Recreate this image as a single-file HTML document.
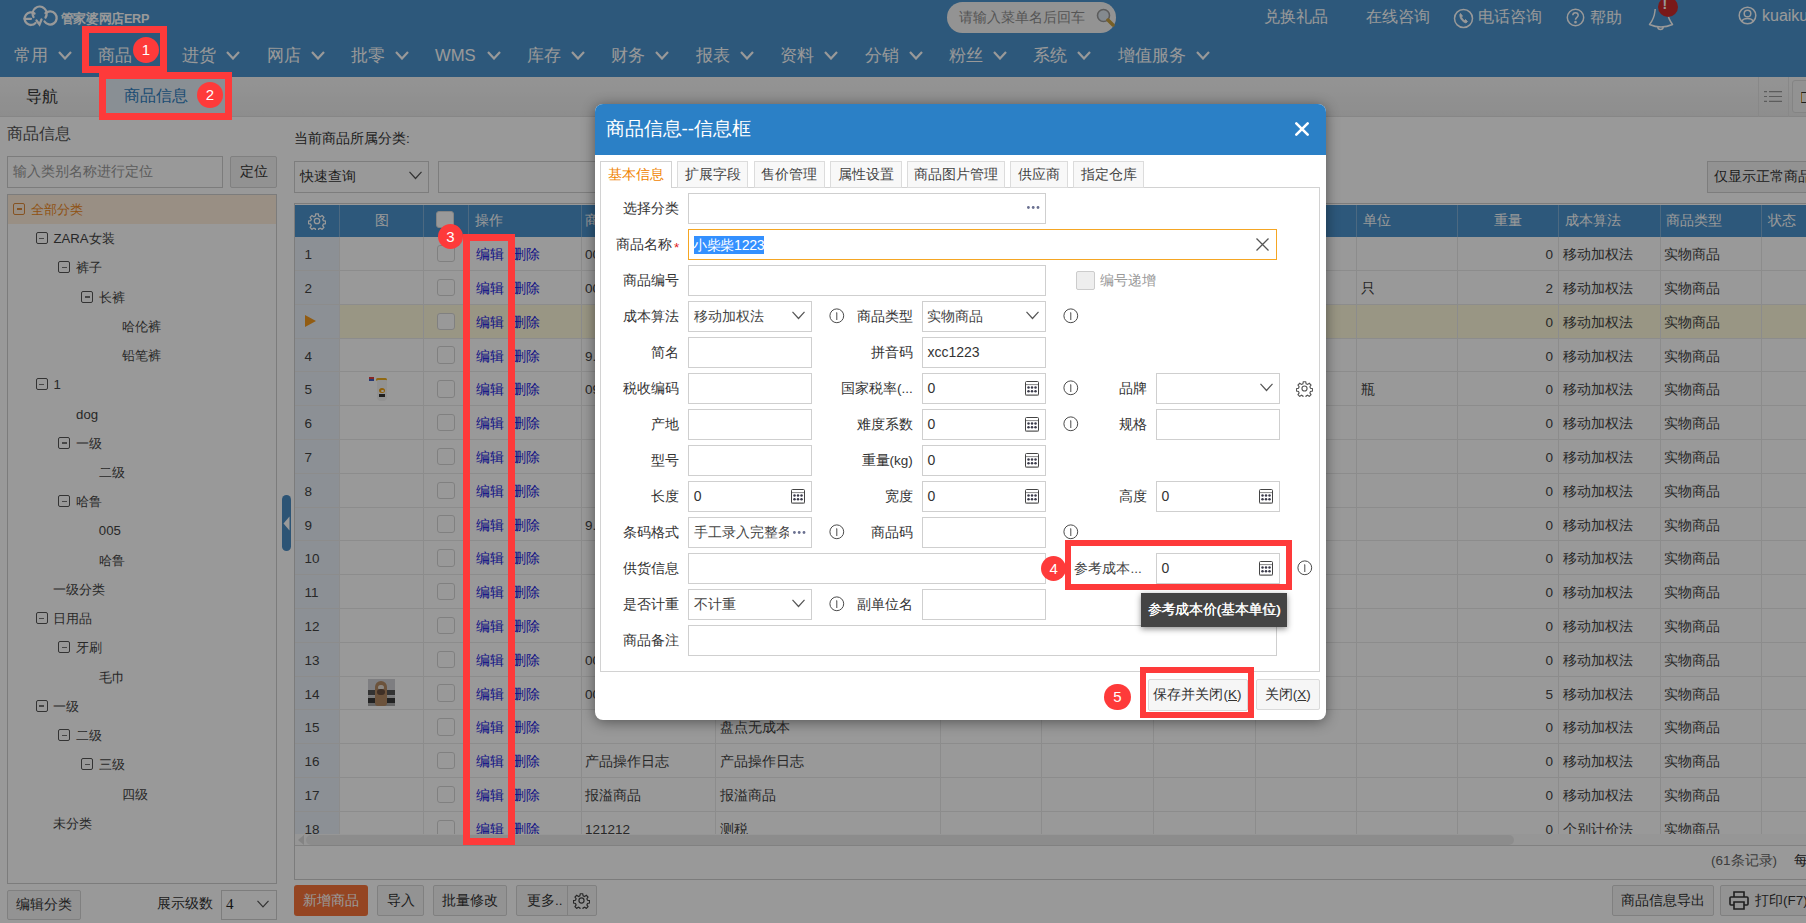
<!DOCTYPE html>
<html><head><meta charset="utf-8">
<style>
*{box-sizing:border-box;margin:0;padding:0}
html,body{width:1806px;height:923px;overflow:hidden;background:#fff;font-family:"Liberation Sans",sans-serif;color:#333}
.a{position:absolute;white-space:nowrap}
#hdr{position:absolute;left:0;top:0;width:1806px;height:77px;background:#4b93cd}
.nav{position:absolute;top:45px;height:22px;line-height:22px;font-size:16.6px;color:#fff;white-space:nowrap}
.chev{position:absolute;top:51px;width:14px;height:9px}
#tabbar{position:absolute;left:0;top:77px;width:1806px;height:40px;background:linear-gradient(#f7f7f7,#ececec);border-bottom:1px solid #e0e0e0}
.inp{position:absolute;background:#fff;border:1px solid #d0d0d0}
.btn{position:absolute;background:#f6f6f6;border:1px solid #d6d6d6;border-radius:2px;text-align:center;color:#333;white-space:nowrap}
.tree{position:absolute;font-size:13.2px;line-height:20px;color:#444;white-space:nowrap}
.tb{position:absolute;width:12px;height:12px;border:1px solid #555;border-radius:2px}
.tb:after{content:"";position:absolute;left:2.5px;top:4.5px;width:5px;height:1.5px;background:#777}
.tb0:after{background:#e08a3a}
#mask{position:absolute;left:0;top:0;width:1806px;height:923px;background:rgba(0,0,0,0.4)}
.red{position:absolute;border:7px solid #fe3a3a}
.circ{position:absolute;width:26px;height:26px;border-radius:50%;background:#fe3a3a;color:#fff;font-size:15px;line-height:26px;text-align:center}
</style></head><body>
<!-- HEADER -->
<div id="hdr">
  <svg class="a" style="left:0;top:0" width="60" height="30" viewBox="0 0 60 30" fill="none" stroke="#fff" stroke-width="2.3" stroke-linecap="round">
    <path d="M34.5 13.5 A6.3 6.3 0 1 0 35.5 23"/>
    <path d="M24.5 18.8 H31"/>
    <path d="M33.5 17 A7 7 0 1 1 45.5 17.5"/>
    <path d="M45.5 13.2 A6.6 6.6 0 1 1 44.5 21.5"/>
    <path d="M36.5 20.5 L39.5 24.5 L41.5 19.5"/>
  </svg>
  <div class="a" style="left:60.5px;top:10.5px;font-size:12.6px;line-height:16px;color:#fff;font-weight:bold;letter-spacing:-0.3px">管家婆网店ERP</div>
  <div class="a" style="left:947px;top:2px;width:169px;height:31px;border-radius:16px;background:#f6f6f6"></div>
  <div class="a" style="left:959px;top:8px;font-size:13.5px;line-height:19px;color:#8e8e8e">请输入菜单名后回车</div>
  <svg class="a" style="left:1096px;top:8px" width="19" height="19" viewBox="0 0 19 19">
    <circle cx="7.5" cy="7.5" r="6" fill="#dde6ef" stroke="#9a9a9a" stroke-width="1.6"/>
    <path d="M12 12 L17 17" stroke="#c8a040" stroke-width="3.5" stroke-linecap="round"/>
  </svg>
  <div class="a" style="left:1264px;top:7px;font-size:15.75px;line-height:20px;color:#fff">兑换礼品</div>
  <div class="a" style="left:1366px;top:7px;font-size:15.75px;line-height:20px;color:#fff">在线咨询</div>
  <svg class="a" style="left:1453px;top:8px" width="21" height="21" viewBox="0 0 21 21" fill="none" stroke="#fff" stroke-width="1.5">
    <circle cx="10.5" cy="10.5" r="9"/>
    <path d="M7 6 C6 9 9 14 13 15 L14.5 13.5 L12.5 11.5 L11.5 12.5 C10 11.5 9 10.5 8.5 9 L9.5 8 L7.5 5.5 Z" fill="#fff" stroke-width="0.8"/>
  </svg>
  <div class="a" style="left:1478px;top:7px;font-size:15.75px;line-height:20px;color:#fff">电话咨询</div>
  <svg class="a" style="left:1566px;top:8px" width="19" height="19" viewBox="0 0 19 19" fill="none" stroke="#fff" stroke-width="1.5">
    <circle cx="9.5" cy="9.5" r="8.2"/>
    <path d="M6.8 7.3 C6.8 3.8 12.2 3.8 12.2 7.3 C12.2 9.3 9.5 9.5 9.5 11.8"/>
    <circle cx="9.5" cy="14.2" r="0.6" fill="#fff"/>
  </svg>
  <div class="a" style="left:1590px;top:8px;font-size:15.75px;line-height:20px;color:#fff">帮助</div>
  <svg class="a" style="left:1648px;top:6px" width="27" height="26" viewBox="0 0 27 26" fill="none" stroke="#fff" stroke-width="1.5" stroke-linejoin="round">
    <path d="M7.2 3 C6.6 8 6.8 12 1.5 18.5 Q13 23.5 24.5 18.5 C19.5 12 19.5 8 18.5 3"/>
    <path d="M9.8 21 C10 24.3 15 24.3 15.2 21"/>
  </svg>
  <div class="a" style="left:1657.5px;top:-3.3px;width:20px;height:20px;border-radius:50%;background:#cc2a2a;color:#fff;font-size:14px;line-height:15px;text-align:left;padding-left:5px;font-weight:bold">!</div>
  <svg class="a" style="left:1738px;top:6px" width="19" height="19" viewBox="0 0 19 19" fill="none" stroke="#fff" stroke-width="1.5">
    <circle cx="9.5" cy="9.5" r="8.3"/>
    <circle cx="9.5" cy="7.5" r="3.3"/>
    <path d="M3.8 15.5 C5 11.5 14 11.5 15.2 15.5"/>
  </svg>
  <div class="a" style="left:1762px;top:6px;font-size:16px;line-height:20px;color:#fff">kuaiku</div>

  <div class="nav" style="left:14px">常用</div>
  <div class="nav" style="left:98px">商品</div>
  <div class="nav" style="left:182px">进货</div>
  <div class="nav" style="left:267px">网店</div>
  <div class="nav" style="left:351px">批零</div>
  <div class="nav" style="left:435px">WMS</div>
  <div class="nav" style="left:527px">库存</div>
  <div class="nav" style="left:611px">财务</div>
  <div class="nav" style="left:696px">报表</div>
  <div class="nav" style="left:780px">资料</div>
  <div class="nav" style="left:865px">分销</div>
  <div class="nav" style="left:949px">粉丝</div>
  <div class="nav" style="left:1033px">系统</div>
  <div class="nav" style="left:1118px">增值服务</div>
  <svg class="chev" style="left:57.5px" viewBox="0 0 14 9" fill="none" stroke="#fff" stroke-width="2.2"><path d="M1 1 L7 7.5 L13 1"/></svg>
<svg class="chev" style="left:141.5px" viewBox="0 0 14 9" fill="none" stroke="#fff" stroke-width="2.2"><path d="M1 1 L7 7.5 L13 1"/></svg>
<svg class="chev" style="left:225.5px" viewBox="0 0 14 9" fill="none" stroke="#fff" stroke-width="2.2"><path d="M1 1 L7 7.5 L13 1"/></svg>
<svg class="chev" style="left:310.5px" viewBox="0 0 14 9" fill="none" stroke="#fff" stroke-width="2.2"><path d="M1 1 L7 7.5 L13 1"/></svg>
<svg class="chev" style="left:394.5px" viewBox="0 0 14 9" fill="none" stroke="#fff" stroke-width="2.2"><path d="M1 1 L7 7.5 L13 1"/></svg>
<svg class="chev" style="left:570.5px" viewBox="0 0 14 9" fill="none" stroke="#fff" stroke-width="2.2"><path d="M1 1 L7 7.5 L13 1"/></svg>
<svg class="chev" style="left:654.5px" viewBox="0 0 14 9" fill="none" stroke="#fff" stroke-width="2.2"><path d="M1 1 L7 7.5 L13 1"/></svg>
<svg class="chev" style="left:739.5px" viewBox="0 0 14 9" fill="none" stroke="#fff" stroke-width="2.2"><path d="M1 1 L7 7.5 L13 1"/></svg>
<svg class="chev" style="left:823.5px" viewBox="0 0 14 9" fill="none" stroke="#fff" stroke-width="2.2"><path d="M1 1 L7 7.5 L13 1"/></svg>
<svg class="chev" style="left:908.5px" viewBox="0 0 14 9" fill="none" stroke="#fff" stroke-width="2.2"><path d="M1 1 L7 7.5 L13 1"/></svg>
<svg class="chev" style="left:992.5px" viewBox="0 0 14 9" fill="none" stroke="#fff" stroke-width="2.2"><path d="M1 1 L7 7.5 L13 1"/></svg>
<svg class="chev" style="left:1076.5px" viewBox="0 0 14 9" fill="none" stroke="#fff" stroke-width="2.2"><path d="M1 1 L7 7.5 L13 1"/></svg>
<svg class="chev" style="left:486.5px" viewBox="0 0 14 9" fill="none" stroke="#fff" stroke-width="2.2"><path d="M1 1 L7 7.5 L13 1"/></svg>
<svg class="chev" style="left:1196px" viewBox="0 0 14 9" fill="none" stroke="#fff" stroke-width="2.2"><path d="M1 1 L7 7.5 L13 1"/></svg>

</div>
<!-- TABBAR -->
<div id="tabbar"></div>
<div class="a" style="left:26px;top:87px;font-size:15.75px;line-height:20px;color:#333">导航</div>
<div class="a" style="left:99px;top:77px;width:133px;height:40px;background:#e4eef7"></div>
<div class="a" style="left:124px;top:86px;font-size:15.75px;line-height:20px;color:#2f7fc1">商品信息</div>
<div class="a" style="left:1758px;top:77px;width:1px;height:40px;background:#e3e3e3"></div>
<div class="a" style="left:1788px;top:77px;width:1px;height:40px;background:#e3e3e3"></div>
<svg class="a" style="left:1764px;top:91px" width="19" height="11" viewBox="0 0 19 11" stroke="#999" stroke-width="1.2">
  <path d="M0 .6 H3 M5 .6 H18 M0 5.5 H3 M5 5.5 H18 M0 10.4 H3 M5 10.4 H18"/>
</svg>
<div class="a" style="left:1792px;top:80px;width:30px;height:33px;border:1px solid #ddd;border-radius:3px;background:#f3f3f3"></div>
<div class="a" style="left:1801px;top:92px;width:8px;height:11px;border:1.5px solid #333;border-left-color:#e0a040"></div>


<div class="a" style="left:7px;top:124px;font-size:15.75px;line-height:20px;color:#555">商品信息</div>
<div class="inp" style="left:7px;top:156px;width:216px;height:32px;border-color:#cfcfcf"></div>
<div class="a" style="left:13px;top:162px;font-size:13.5px;line-height:20px;color:#9a9a9a">输入类别名称进行定位</div>
<div class="btn" style="left:230px;top:156px;width:47px;height:32px;line-height:30px;font-size:13.5px;background:#f3f3f3">定位</div>
<div class="inp" style="left:7px;top:194px;width:270px;height:690px;border-color:#cfcfcf"></div>
<div class="a" style="left:8px;top:195px;width:268px;height:29px;background:#ffeedd"></div>
<div class="tb tb0" style="left:13.0px;top:202.8px;border-color:#e08a3a"></div>
<div class="tree" style="left:30.7px;top:199.8px;color:#f08a1c">全部分类</div>
<div class="tb" style="left:35.7px;top:232.0px;border-color:#555"></div>
<div class="tree" style="left:53.4px;top:229.0px;color:#444">ZARA女装</div>
<div class="tb" style="left:58.4px;top:261.3px;border-color:#555"></div>
<div class="tree" style="left:76.1px;top:258.3px;color:#444">裤子</div>
<div class="tb" style="left:81.1px;top:290.5px;border-color:#555"></div>
<div class="tree" style="left:98.8px;top:287.5px;color:#444">长裤</div>
<div class="tree" style="left:121.5px;top:316.8px;color:#444">哈伦裤</div>
<div class="tree" style="left:121.5px;top:346.0px;color:#444">铅笔裤</div>
<div class="tb" style="left:35.7px;top:378.2px;border-color:#555"></div>
<div class="tree" style="left:53.4px;top:375.2px;color:#444">1</div>
<div class="tree" style="left:76.1px;top:404.5px;color:#444">dog</div>
<div class="tb" style="left:58.4px;top:436.7px;border-color:#555"></div>
<div class="tree" style="left:76.1px;top:433.7px;color:#444">一级</div>
<div class="tree" style="left:98.8px;top:463.0px;color:#444">二级</div>
<div class="tb" style="left:58.4px;top:495.2px;border-color:#555"></div>
<div class="tree" style="left:76.1px;top:492.2px;color:#444">哈鲁</div>
<div class="tree" style="left:98.8px;top:521.4px;color:#444">005</div>
<div class="tree" style="left:98.8px;top:550.7px;color:#444">哈鲁</div>
<div class="tree" style="left:53.4px;top:579.9px;color:#444">一级分类</div>
<div class="tb" style="left:35.7px;top:612.2px;border-color:#555"></div>
<div class="tree" style="left:53.4px;top:609.2px;color:#444">日用品</div>
<div class="tb" style="left:58.4px;top:641.4px;border-color:#555"></div>
<div class="tree" style="left:76.1px;top:638.4px;color:#444">牙刷</div>
<div class="tree" style="left:98.8px;top:667.6px;color:#444">毛巾</div>
<div class="tb" style="left:35.7px;top:699.9px;border-color:#555"></div>
<div class="tree" style="left:53.4px;top:696.9px;color:#444">一级</div>
<div class="tb" style="left:58.4px;top:729.1px;border-color:#555"></div>
<div class="tree" style="left:76.1px;top:726.1px;color:#444">二级</div>
<div class="tb" style="left:81.1px;top:758.4px;border-color:#555"></div>
<div class="tree" style="left:98.8px;top:755.4px;color:#444">三级</div>
<div class="tree" style="left:121.5px;top:784.6px;color:#444">四级</div>
<div class="tree" style="left:53.4px;top:813.8px;color:#444">未分类</div>

<div class="btn" style="left:7px;top:890px;width:74px;height:30px;line-height:28px;font-size:13.5px">编辑分类</div>
<div class="a" style="left:157px;top:894px;font-size:13.5px;line-height:20px;color:#333">展示级数</div>
<div class="inp" style="left:221px;top:890px;width:56px;height:30px"></div>
<div class="a" style="left:226px;top:894px;font-size:15px;line-height:20px;color:#222;font-family:'Liberation Serif',serif">4</div>
<svg class="a" style="left:257px;top:900px" width="12" height="8" viewBox="0 0 12 8" fill="none" stroke="#555" stroke-width="1.2"><path d="M.5 .8 L6 6.8 L11.5 .8"/></svg>
<div class="a" style="left:282px;top:495px;width:9px;height:56px;border-radius:5px;background:#4a8cc4"></div>
<svg class="a" style="left:283px;top:516px" width="7" height="15" viewBox="0 0 7 15"><path d="M6.5 0.5 L0.5 7.5 L6.5 14.5 Z" fill="#fff"/></svg>


<div class="a" style="left:294px;top:129px;font-size:13.5px;line-height:20px;color:#333">当前商品所属分类:</div>
<div class="inp" style="left:294px;top:161px;width:135px;height:32px"></div>
<div class="a" style="left:300px;top:167px;font-size:13.5px;line-height:20px;color:#333">快速查询</div>
<svg class="a" style="left:409px;top:171px" width="13" height="9" viewBox="0 0 13 9" fill="none" stroke="#555" stroke-width="1.2"><path d="M.5 .8 L6.5 7.5 L12.5 .8"/></svg>
<div class="inp" style="left:438px;top:161px;width:400px;height:32px"></div>
<div class="btn" style="left:1707px;top:161px;width:120px;height:32px;line-height:30px;font-size:13.5px;text-align:left;padding-left:6px;background:#f4f4f4;border-color:#d0d0d0;border-radius:0">仅显示正常商品</div>
<div class="a" style="left:294px;top:203px;width:1512px;height:677px;border-left:1px solid #cfcfcf;border-top:1px solid #cfcfcf;border-bottom:1px solid #cfcfcf"></div>
<div class="a" style="left:295px;top:204.5px;width:1511px;height:32.2px;background:#4b93cd"></div>
<div class="a" style="left:295px;top:236.7px;width:44px;height:597.3px;background:#eaf1f8"></div>
<div class="a" style="left:339px;top:304.3px;width:1467px;height:33.8px;background:#fffbdc"></div>

<div class="a" style="left:338.5px;top:204.5px;width:1px;height:32.2px;background:#7fb0d8"></div>
<div class="a" style="left:338.5px;top:236.7px;width:1px;height:597.3px;background:#eaeaea"></div>
<div class="a" style="left:423.0px;top:204.5px;width:1px;height:32.2px;background:#7fb0d8"></div>
<div class="a" style="left:423.0px;top:236.7px;width:1px;height:597.3px;background:#eaeaea"></div>
<div class="a" style="left:467.5px;top:204.5px;width:1px;height:32.2px;background:#7fb0d8"></div>
<div class="a" style="left:467.5px;top:236.7px;width:1px;height:597.3px;background:#eaeaea"></div>
<div class="a" style="left:581.0px;top:204.5px;width:1px;height:32.2px;background:#7fb0d8"></div>
<div class="a" style="left:581.0px;top:236.7px;width:1px;height:597.3px;background:#eaeaea"></div>
<div class="a" style="left:714.5px;top:204.5px;width:1px;height:32.2px;background:#7fb0d8"></div>
<div class="a" style="left:714.5px;top:236.7px;width:1px;height:597.3px;background:#eaeaea"></div>
<div class="a" style="left:939.8px;top:204.5px;width:1px;height:32.2px;background:#7fb0d8"></div>
<div class="a" style="left:939.8px;top:236.7px;width:1px;height:597.3px;background:#eaeaea"></div>
<div class="a" style="left:1040.8px;top:204.5px;width:1px;height:32.2px;background:#7fb0d8"></div>
<div class="a" style="left:1040.8px;top:236.7px;width:1px;height:597.3px;background:#eaeaea"></div>
<div class="a" style="left:1152.9px;top:204.5px;width:1px;height:32.2px;background:#7fb0d8"></div>
<div class="a" style="left:1152.9px;top:236.7px;width:1px;height:597.3px;background:#eaeaea"></div>
<div class="a" style="left:1255.1px;top:204.5px;width:1px;height:32.2px;background:#7fb0d8"></div>
<div class="a" style="left:1255.1px;top:236.7px;width:1px;height:597.3px;background:#eaeaea"></div>
<div class="a" style="left:1356.1px;top:204.5px;width:1px;height:32.2px;background:#7fb0d8"></div>
<div class="a" style="left:1356.1px;top:236.7px;width:1px;height:597.3px;background:#eaeaea"></div>
<div class="a" style="left:1456.7px;top:204.5px;width:1px;height:32.2px;background:#7fb0d8"></div>
<div class="a" style="left:1456.7px;top:236.7px;width:1px;height:597.3px;background:#eaeaea"></div>
<div class="a" style="left:1557.7px;top:204.5px;width:1px;height:32.2px;background:#7fb0d8"></div>
<div class="a" style="left:1557.7px;top:236.7px;width:1px;height:597.3px;background:#eaeaea"></div>
<div class="a" style="left:1659.9px;top:204.5px;width:1px;height:32.2px;background:#7fb0d8"></div>
<div class="a" style="left:1659.9px;top:236.7px;width:1px;height:597.3px;background:#eaeaea"></div>
<div class="a" style="left:1760.8px;top:204.5px;width:1px;height:32.2px;background:#7fb0d8"></div>
<div class="a" style="left:1760.8px;top:236.7px;width:1px;height:597.3px;background:#eaeaea"></div>
<div class="a" style="left:295px;top:270.0px;width:1511px;height:1px;background:#eaeaea"></div>
<div class="a" style="left:295px;top:303.8px;width:1511px;height:1px;background:#eaeaea"></div>
<div class="a" style="left:295px;top:337.6px;width:1511px;height:1px;background:#eaeaea"></div>
<div class="a" style="left:295px;top:371.4px;width:1511px;height:1px;background:#eaeaea"></div>
<div class="a" style="left:295px;top:405.2px;width:1511px;height:1px;background:#eaeaea"></div>
<div class="a" style="left:295px;top:439.0px;width:1511px;height:1px;background:#eaeaea"></div>
<div class="a" style="left:295px;top:472.8px;width:1511px;height:1px;background:#eaeaea"></div>
<div class="a" style="left:295px;top:506.6px;width:1511px;height:1px;background:#eaeaea"></div>
<div class="a" style="left:295px;top:540.4px;width:1511px;height:1px;background:#eaeaea"></div>
<div class="a" style="left:295px;top:574.2px;width:1511px;height:1px;background:#eaeaea"></div>
<div class="a" style="left:295px;top:608.0px;width:1511px;height:1px;background:#eaeaea"></div>
<div class="a" style="left:295px;top:641.8px;width:1511px;height:1px;background:#eaeaea"></div>
<div class="a" style="left:295px;top:675.6px;width:1511px;height:1px;background:#eaeaea"></div>
<div class="a" style="left:295px;top:709.4px;width:1511px;height:1px;background:#eaeaea"></div>
<div class="a" style="left:295px;top:743.2px;width:1511px;height:1px;background:#eaeaea"></div>
<div class="a" style="left:295px;top:777.0px;width:1511px;height:1px;background:#eaeaea"></div>
<div class="a" style="left:295px;top:810.8px;width:1511px;height:1px;background:#eaeaea"></div>
<svg class="a" style="left:307.5px;top:211.5px" width="18" height="18" viewBox="0 0 24 24" fill="none" stroke="#fff" stroke-width="1.7">
<path d="M10.3 2.5h3.4l.6 2.9 2 .9 2.5-1.6 2.4 2.4-1.6 2.5.9 2 2.9.6v3.4l-2.9.6-.9 2 1.6 2.5-2.4 2.4-2.5-1.6-2 .9-.6 2.9h-3.4l-.6-2.9-2-.9-2.5 1.6-2.4-2.4 1.6-2.5-.9-2-2.9-.6v-3.4l2.9-.6.9-2-1.6-2.5 2.4-2.4 2.5 1.6 2-.9z"/><circle cx="12" cy="12" r="3.6"/></svg>
<div class="a" style="left:374.5px;top:210.5px;font-size:13.5px;line-height:20px;color:#fff">图</div>
<div class="a" style="left:435.5px;top:210.5px;width:18px;height:17.5px;border-radius:3px;background:#fff;border:1px solid #ddd"></div>
<div class="a" style="left:474.5px;top:210.5px;font-size:13.5px;line-height:20px;color:#fff">操作</div>
<div class="a" style="left:585px;top:210.5px;font-size:13.5px;line-height:20px;color:#fff">商品编号</div>
<div class="a" style="left:1363px;top:210.5px;font-size:13.5px;line-height:20px;color:#fff">单位</div>
<div class="a" style="left:1494px;top:210.5px;font-size:13.5px;line-height:20px;color:#fff">重量</div>
<div class="a" style="left:1565px;top:210.5px;font-size:13.5px;line-height:20px;color:#fff">成本算法</div>
<div class="a" style="left:1666px;top:210.5px;font-size:13.5px;line-height:20px;color:#fff">商品类型</div>
<div class="a" style="left:1768px;top:210.5px;font-size:13.5px;line-height:20px;color:#fff">状态</div>
<div class="a" style="left:304.5px;top:245.1px;font-size:13.5px;line-height:20px;color:#444">1</div>
<div class="a" style="left:436.5px;top:244.9px;width:18px;height:17.5px;border-radius:3px;background:#fff;border:1px solid #d6d6d6"></div>
<div class="a" style="left:476px;top:245.1px;font-size:13.5px;line-height:20px;color:#2020e0">编辑</div>
<div class="a" style="left:512px;top:245.1px;font-size:13.5px;line-height:20px;color:#2020e0">删除</div>
<div class="a" style="left:585px;top:245.1px;font-size:13.5px;line-height:20px;color:#444">0001</div>
<div class="a" style="left:1457px;width:96px;text-align:right;top:245.1px;font-size:13.5px;line-height:20px;color:#444">0</div>
<div class="a" style="left:1563px;top:245.1px;font-size:13.5px;line-height:20px;color:#444">移动加权法</div>
<div class="a" style="left:1664px;top:245.1px;font-size:13.5px;line-height:20px;color:#444">实物商品</div>
<div class="a" style="left:304.5px;top:278.9px;font-size:13.5px;line-height:20px;color:#444">2</div>
<div class="a" style="left:436.5px;top:278.7px;width:18px;height:17.5px;border-radius:3px;background:#fff;border:1px solid #d6d6d6"></div>
<div class="a" style="left:476px;top:278.9px;font-size:13.5px;line-height:20px;color:#2020e0">编辑</div>
<div class="a" style="left:512px;top:278.9px;font-size:13.5px;line-height:20px;color:#2020e0">删除</div>
<div class="a" style="left:585px;top:278.9px;font-size:13.5px;line-height:20px;color:#444">0002</div>
<div class="a" style="left:1361px;top:278.9px;font-size:13.5px;line-height:20px;color:#444">只</div>
<div class="a" style="left:1457px;width:96px;text-align:right;top:278.9px;font-size:13.5px;line-height:20px;color:#444">2</div>
<div class="a" style="left:1563px;top:278.9px;font-size:13.5px;line-height:20px;color:#444">移动加权法</div>
<div class="a" style="left:1664px;top:278.9px;font-size:13.5px;line-height:20px;color:#444">实物商品</div>
<svg class="a" style="left:305px;top:315.2px" width="11" height="12" viewBox="0 0 11 12"><path d="M0 0 L11 6 L0 12Z" fill="#f39a1e"/></svg>
<div class="a" style="left:436.5px;top:312.5px;width:18px;height:17.5px;border-radius:3px;background:#fff;border:1px solid #d6d6d6"></div>
<div class="a" style="left:476px;top:312.7px;font-size:13.5px;line-height:20px;color:#2020e0">编辑</div>
<div class="a" style="left:512px;top:312.7px;font-size:13.5px;line-height:20px;color:#2020e0">删除</div>
<div class="a" style="left:1457px;width:96px;text-align:right;top:312.7px;font-size:13.5px;line-height:20px;color:#444">0</div>
<div class="a" style="left:1563px;top:312.7px;font-size:13.5px;line-height:20px;color:#444">移动加权法</div>
<div class="a" style="left:1664px;top:312.7px;font-size:13.5px;line-height:20px;color:#444">实物商品</div>
<div class="a" style="left:304.5px;top:346.5px;font-size:13.5px;line-height:20px;color:#444">4</div>
<div class="a" style="left:436.5px;top:346.3px;width:18px;height:17.5px;border-radius:3px;background:#fff;border:1px solid #d6d6d6"></div>
<div class="a" style="left:476px;top:346.5px;font-size:13.5px;line-height:20px;color:#2020e0">编辑</div>
<div class="a" style="left:512px;top:346.5px;font-size:13.5px;line-height:20px;color:#2020e0">删除</div>
<div class="a" style="left:585px;top:346.5px;font-size:13.5px;line-height:20px;color:#444">9.9</div>
<div class="a" style="left:1457px;width:96px;text-align:right;top:346.5px;font-size:13.5px;line-height:20px;color:#444">0</div>
<div class="a" style="left:1563px;top:346.5px;font-size:13.5px;line-height:20px;color:#444">移动加权法</div>
<div class="a" style="left:1664px;top:346.5px;font-size:13.5px;line-height:20px;color:#444">实物商品</div>
<div class="a" style="left:304.5px;top:380.3px;font-size:13.5px;line-height:20px;color:#444">5</div>
<div class="a" style="left:436.5px;top:380.1px;width:18px;height:17.5px;border-radius:3px;background:#fff;border:1px solid #d6d6d6"></div>
<div class="a" style="left:476px;top:380.3px;font-size:13.5px;line-height:20px;color:#2020e0">编辑</div>
<div class="a" style="left:512px;top:380.3px;font-size:13.5px;line-height:20px;color:#2020e0">删除</div>
<div class="a" style="left:585px;top:380.3px;font-size:13.5px;line-height:20px;color:#444">0901</div>
<div class="a" style="left:1361px;top:380.3px;font-size:13.5px;line-height:20px;color:#444">瓶</div>
<div class="a" style="left:1457px;width:96px;text-align:right;top:380.3px;font-size:13.5px;line-height:20px;color:#444">0</div>
<div class="a" style="left:1563px;top:380.3px;font-size:13.5px;line-height:20px;color:#444">移动加权法</div>
<div class="a" style="left:1664px;top:380.3px;font-size:13.5px;line-height:20px;color:#444">实物商品</div>
<div class="a" style="left:304.5px;top:414.1px;font-size:13.5px;line-height:20px;color:#444">6</div>
<div class="a" style="left:436.5px;top:413.9px;width:18px;height:17.5px;border-radius:3px;background:#fff;border:1px solid #d6d6d6"></div>
<div class="a" style="left:476px;top:414.1px;font-size:13.5px;line-height:20px;color:#2020e0">编辑</div>
<div class="a" style="left:512px;top:414.1px;font-size:13.5px;line-height:20px;color:#2020e0">删除</div>
<div class="a" style="left:1457px;width:96px;text-align:right;top:414.1px;font-size:13.5px;line-height:20px;color:#444">0</div>
<div class="a" style="left:1563px;top:414.1px;font-size:13.5px;line-height:20px;color:#444">移动加权法</div>
<div class="a" style="left:1664px;top:414.1px;font-size:13.5px;line-height:20px;color:#444">实物商品</div>
<div class="a" style="left:304.5px;top:447.9px;font-size:13.5px;line-height:20px;color:#444">7</div>
<div class="a" style="left:436.5px;top:447.7px;width:18px;height:17.5px;border-radius:3px;background:#fff;border:1px solid #d6d6d6"></div>
<div class="a" style="left:476px;top:447.9px;font-size:13.5px;line-height:20px;color:#2020e0">编辑</div>
<div class="a" style="left:512px;top:447.9px;font-size:13.5px;line-height:20px;color:#2020e0">删除</div>
<div class="a" style="left:1457px;width:96px;text-align:right;top:447.9px;font-size:13.5px;line-height:20px;color:#444">0</div>
<div class="a" style="left:1563px;top:447.9px;font-size:13.5px;line-height:20px;color:#444">移动加权法</div>
<div class="a" style="left:1664px;top:447.9px;font-size:13.5px;line-height:20px;color:#444">实物商品</div>
<div class="a" style="left:304.5px;top:481.7px;font-size:13.5px;line-height:20px;color:#444">8</div>
<div class="a" style="left:436.5px;top:481.5px;width:18px;height:17.5px;border-radius:3px;background:#fff;border:1px solid #d6d6d6"></div>
<div class="a" style="left:476px;top:481.7px;font-size:13.5px;line-height:20px;color:#2020e0">编辑</div>
<div class="a" style="left:512px;top:481.7px;font-size:13.5px;line-height:20px;color:#2020e0">删除</div>
<div class="a" style="left:1457px;width:96px;text-align:right;top:481.7px;font-size:13.5px;line-height:20px;color:#444">0</div>
<div class="a" style="left:1563px;top:481.7px;font-size:13.5px;line-height:20px;color:#444">移动加权法</div>
<div class="a" style="left:1664px;top:481.7px;font-size:13.5px;line-height:20px;color:#444">实物商品</div>
<div class="a" style="left:304.5px;top:515.5px;font-size:13.5px;line-height:20px;color:#444">9</div>
<div class="a" style="left:436.5px;top:515.3px;width:18px;height:17.5px;border-radius:3px;background:#fff;border:1px solid #d6d6d6"></div>
<div class="a" style="left:476px;top:515.5px;font-size:13.5px;line-height:20px;color:#2020e0">编辑</div>
<div class="a" style="left:512px;top:515.5px;font-size:13.5px;line-height:20px;color:#2020e0">删除</div>
<div class="a" style="left:585px;top:515.5px;font-size:13.5px;line-height:20px;color:#444">9.9</div>
<div class="a" style="left:1457px;width:96px;text-align:right;top:515.5px;font-size:13.5px;line-height:20px;color:#444">0</div>
<div class="a" style="left:1563px;top:515.5px;font-size:13.5px;line-height:20px;color:#444">移动加权法</div>
<div class="a" style="left:1664px;top:515.5px;font-size:13.5px;line-height:20px;color:#444">实物商品</div>
<div class="a" style="left:304.5px;top:549.3px;font-size:13.5px;line-height:20px;color:#444">10</div>
<div class="a" style="left:436.5px;top:549.1px;width:18px;height:17.5px;border-radius:3px;background:#fff;border:1px solid #d6d6d6"></div>
<div class="a" style="left:476px;top:549.3px;font-size:13.5px;line-height:20px;color:#2020e0">编辑</div>
<div class="a" style="left:512px;top:549.3px;font-size:13.5px;line-height:20px;color:#2020e0">删除</div>
<div class="a" style="left:1457px;width:96px;text-align:right;top:549.3px;font-size:13.5px;line-height:20px;color:#444">0</div>
<div class="a" style="left:1563px;top:549.3px;font-size:13.5px;line-height:20px;color:#444">移动加权法</div>
<div class="a" style="left:1664px;top:549.3px;font-size:13.5px;line-height:20px;color:#444">实物商品</div>
<div class="a" style="left:304.5px;top:583.1px;font-size:13.5px;line-height:20px;color:#444">11</div>
<div class="a" style="left:436.5px;top:582.9px;width:18px;height:17.5px;border-radius:3px;background:#fff;border:1px solid #d6d6d6"></div>
<div class="a" style="left:476px;top:583.1px;font-size:13.5px;line-height:20px;color:#2020e0">编辑</div>
<div class="a" style="left:512px;top:583.1px;font-size:13.5px;line-height:20px;color:#2020e0">删除</div>
<div class="a" style="left:1457px;width:96px;text-align:right;top:583.1px;font-size:13.5px;line-height:20px;color:#444">0</div>
<div class="a" style="left:1563px;top:583.1px;font-size:13.5px;line-height:20px;color:#444">移动加权法</div>
<div class="a" style="left:1664px;top:583.1px;font-size:13.5px;line-height:20px;color:#444">实物商品</div>
<div class="a" style="left:304.5px;top:616.9px;font-size:13.5px;line-height:20px;color:#444">12</div>
<div class="a" style="left:436.5px;top:616.7px;width:18px;height:17.5px;border-radius:3px;background:#fff;border:1px solid #d6d6d6"></div>
<div class="a" style="left:476px;top:616.9px;font-size:13.5px;line-height:20px;color:#2020e0">编辑</div>
<div class="a" style="left:512px;top:616.9px;font-size:13.5px;line-height:20px;color:#2020e0">删除</div>
<div class="a" style="left:1457px;width:96px;text-align:right;top:616.9px;font-size:13.5px;line-height:20px;color:#444">0</div>
<div class="a" style="left:1563px;top:616.9px;font-size:13.5px;line-height:20px;color:#444">移动加权法</div>
<div class="a" style="left:1664px;top:616.9px;font-size:13.5px;line-height:20px;color:#444">实物商品</div>
<div class="a" style="left:304.5px;top:650.7px;font-size:13.5px;line-height:20px;color:#444">13</div>
<div class="a" style="left:436.5px;top:650.5px;width:18px;height:17.5px;border-radius:3px;background:#fff;border:1px solid #d6d6d6"></div>
<div class="a" style="left:476px;top:650.7px;font-size:13.5px;line-height:20px;color:#2020e0">编辑</div>
<div class="a" style="left:512px;top:650.7px;font-size:13.5px;line-height:20px;color:#2020e0">删除</div>
<div class="a" style="left:585px;top:650.7px;font-size:13.5px;line-height:20px;color:#444">0013</div>
<div class="a" style="left:1457px;width:96px;text-align:right;top:650.7px;font-size:13.5px;line-height:20px;color:#444">0</div>
<div class="a" style="left:1563px;top:650.7px;font-size:13.5px;line-height:20px;color:#444">移动加权法</div>
<div class="a" style="left:1664px;top:650.7px;font-size:13.5px;line-height:20px;color:#444">实物商品</div>
<div class="a" style="left:304.5px;top:684.5px;font-size:13.5px;line-height:20px;color:#444">14</div>
<div class="a" style="left:436.5px;top:684.3px;width:18px;height:17.5px;border-radius:3px;background:#fff;border:1px solid #d6d6d6"></div>
<div class="a" style="left:476px;top:684.5px;font-size:13.5px;line-height:20px;color:#2020e0">编辑</div>
<div class="a" style="left:512px;top:684.5px;font-size:13.5px;line-height:20px;color:#2020e0">删除</div>
<div class="a" style="left:585px;top:684.5px;font-size:13.5px;line-height:20px;color:#444">0014</div>
<div class="a" style="left:1457px;width:96px;text-align:right;top:684.5px;font-size:13.5px;line-height:20px;color:#444">5</div>
<div class="a" style="left:1563px;top:684.5px;font-size:13.5px;line-height:20px;color:#444">移动加权法</div>
<div class="a" style="left:1664px;top:684.5px;font-size:13.5px;line-height:20px;color:#444">实物商品</div>
<div class="a" style="left:304.5px;top:718.3px;font-size:13.5px;line-height:20px;color:#444">15</div>
<div class="a" style="left:436.5px;top:718.1px;width:18px;height:17.5px;border-radius:3px;background:#fff;border:1px solid #d6d6d6"></div>
<div class="a" style="left:476px;top:718.3px;font-size:13.5px;line-height:20px;color:#2020e0">编辑</div>
<div class="a" style="left:512px;top:718.3px;font-size:13.5px;line-height:20px;color:#2020e0">删除</div>
<div class="a" style="left:719.5px;top:718.3px;font-size:13.5px;line-height:20px;color:#444">盘点无成本</div>
<div class="a" style="left:1457px;width:96px;text-align:right;top:718.3px;font-size:13.5px;line-height:20px;color:#444">0</div>
<div class="a" style="left:1563px;top:718.3px;font-size:13.5px;line-height:20px;color:#444">移动加权法</div>
<div class="a" style="left:1664px;top:718.3px;font-size:13.5px;line-height:20px;color:#444">实物商品</div>
<div class="a" style="left:304.5px;top:752.1px;font-size:13.5px;line-height:20px;color:#444">16</div>
<div class="a" style="left:436.5px;top:751.9px;width:18px;height:17.5px;border-radius:3px;background:#fff;border:1px solid #d6d6d6"></div>
<div class="a" style="left:476px;top:752.1px;font-size:13.5px;line-height:20px;color:#2020e0">编辑</div>
<div class="a" style="left:512px;top:752.1px;font-size:13.5px;line-height:20px;color:#2020e0">删除</div>
<div class="a" style="left:585px;top:752.1px;font-size:13.5px;line-height:20px;color:#444">产品操作日志</div>
<div class="a" style="left:719.5px;top:752.1px;font-size:13.5px;line-height:20px;color:#444">产品操作日志</div>
<div class="a" style="left:1457px;width:96px;text-align:right;top:752.1px;font-size:13.5px;line-height:20px;color:#444">0</div>
<div class="a" style="left:1563px;top:752.1px;font-size:13.5px;line-height:20px;color:#444">移动加权法</div>
<div class="a" style="left:1664px;top:752.1px;font-size:13.5px;line-height:20px;color:#444">实物商品</div>
<div class="a" style="left:304.5px;top:785.9px;font-size:13.5px;line-height:20px;color:#444">17</div>
<div class="a" style="left:436.5px;top:785.7px;width:18px;height:17.5px;border-radius:3px;background:#fff;border:1px solid #d6d6d6"></div>
<div class="a" style="left:476px;top:785.9px;font-size:13.5px;line-height:20px;color:#2020e0">编辑</div>
<div class="a" style="left:512px;top:785.9px;font-size:13.5px;line-height:20px;color:#2020e0">删除</div>
<div class="a" style="left:585px;top:785.9px;font-size:13.5px;line-height:20px;color:#444">报溢商品</div>
<div class="a" style="left:719.5px;top:785.9px;font-size:13.5px;line-height:20px;color:#444">报溢商品</div>
<div class="a" style="left:1457px;width:96px;text-align:right;top:785.9px;font-size:13.5px;line-height:20px;color:#444">0</div>
<div class="a" style="left:1563px;top:785.9px;font-size:13.5px;line-height:20px;color:#444">移动加权法</div>
<div class="a" style="left:1664px;top:785.9px;font-size:13.5px;line-height:20px;color:#444">实物商品</div>
<div class="a" style="left:304.5px;top:819.7px;font-size:13.5px;line-height:20px;color:#444">18</div>
<div class="a" style="left:436.5px;top:819.5px;width:18px;height:17.5px;border-radius:3px;background:#fff;border:1px solid #d6d6d6"></div>
<div class="a" style="left:476px;top:819.7px;font-size:13.5px;line-height:20px;color:#2020e0">编辑</div>
<div class="a" style="left:512px;top:819.7px;font-size:13.5px;line-height:20px;color:#2020e0">删除</div>
<div class="a" style="left:585px;top:819.7px;font-size:13.5px;line-height:20px;color:#444">121212</div>
<div class="a" style="left:719.5px;top:819.7px;font-size:13.5px;line-height:20px;color:#444">测税</div>
<div class="a" style="left:1457px;width:96px;text-align:right;top:819.7px;font-size:13.5px;line-height:20px;color:#444">0</div>
<div class="a" style="left:1563px;top:819.7px;font-size:13.5px;line-height:20px;color:#444">个别计价法</div>
<div class="a" style="left:1664px;top:819.7px;font-size:13.5px;line-height:20px;color:#444">实物商品</div>
<div class="a" style="left:368px;top:376px;width:22px;height:27px">
<div class="a" style="left:1px;top:1px;width:5px;height:2px;background:#e04040"></div>
<div class="a" style="left:1px;top:3px;width:5px;height:1.5px;background:#4060c0"></div>
<div class="a" style="left:8px;top:1.5px;width:11px;height:3px;border-radius:2px;background:#f0b020"></div>
<div class="a" style="left:8.5px;top:4px;width:10px;height:21px;border-radius:1px 1px 4px 4px;background:#f4f4f4"></div>
<div class="a" style="left:11px;top:12px;width:6px;height:5px;border-radius:50%;background:#f0a010"></div>
<div class="a" style="left:12.5px;top:13.5px;width:3px;height:2px;border-radius:50%;background:#fff"></div>
<div class="a" style="left:11px;top:18px;width:6px;height:2.5px;background:#333"></div>
</div>
<div class="a" style="left:368px;top:679px;width:27px;height:27px;background:#d2d3d8;overflow:hidden">
<div class="a" style="left:0;top:11px;width:27px;height:5px;background:#555"></div>
<div class="a" style="left:0;top:17px;width:27px;height:3px;background:#c8c8c8"></div>
<div class="a" style="left:0;top:19px;width:27px;height:6px;background:#3a3a3a"></div>
<div class="a" style="left:0;top:24px;width:27px;height:3px;background:#aaa"></div>
<div class="a" style="left:7px;top:2px;width:12px;height:25px;border-radius:6px 6px 3px 3px;background:#b48a64"></div>
<div class="a" style="left:10px;top:6px;width:6px;height:5px;border-radius:3px;background:#e8e0d8"></div>
<div class="a" style="left:9px;top:10px;width:8px;height:6px;background:#6a5040;border-radius:3px"></div>
</div>

<div class="a" style="left:295px;top:834px;width:1511px;height:12px;background:#fafafa;border-bottom:1px solid #d8d8d8"></div>
<div class="a" style="left:306px;top:835px;width:1208px;height:10px;border-radius:5px;background:#eaeaea"></div>
<svg class="a" style="left:298px;top:835px" width="7" height="10" viewBox="0 0 7 10"><path d="M6 0 L0 5 L6 10Z" fill="#dadada"/></svg>
<div class="a" style="left:1711px;top:851px;font-size:13.5px;line-height:20px;color:#666">(61条记录)</div>
<div class="a" style="left:1794px;top:851px;font-size:13.5px;line-height:20px;color:#333">每</div>
<div class="btn" style="left:294px;top:885px;width:74px;height:31px;line-height:31px;font-size:13.5px;background:#f8733a;border:none;color:#fff;border-radius:3px">新增商品</div>
<div class="btn" style="left:377px;top:885px;width:47px;height:31px;line-height:29px;font-size:13.5px">导入</div>
<div class="btn" style="left:433px;top:885px;width:74px;height:31px;line-height:29px;font-size:13.5px">批量修改</div>
<div class="btn" style="left:516px;top:885px;width:81px;height:31px;line-height:29px;font-size:13.5px;text-align:left;padding-left:10px">更多..</div>
<div class="a" style="left:567px;top:886px;width:1px;height:29px;background:#d6d6d6"></div>
<svg class="a" style="left:573px;top:892px" width="17" height="17" viewBox="0 0 24 24" fill="none" stroke="#444" stroke-width="1.7">
<path d="M10.3 2.5h3.4l.6 2.9 2 .9 2.5-1.6 2.4 2.4-1.6 2.5.9 2 2.9.6v3.4l-2.9.6-.9 2 1.6 2.5-2.4 2.4-2.5-1.6-2 .9-.6 2.9h-3.4l-.6-2.9-2-.9-2.5 1.6-2.4-2.4 1.6-2.5-.9-2-2.9-.6v-3.4l2.9-.6.9-2-1.6-2.5 2.4-2.4 2.5 1.6 2-.9z"/><circle cx="12" cy="12" r="3.6"/></svg>
<div class="btn" style="left:1612px;top:885px;width:102px;height:31px;line-height:29px;font-size:13.5px">商品信息导出</div>
<div class="btn" style="left:1720px;top:885px;width:100px;height:31px;line-height:29px;font-size:13.5px;text-align:left;padding-left:34px">打印(F7)</div>
<svg class="a" style="left:1729px;top:891px" width="20" height="19" viewBox="0 0 20 19" fill="none" stroke="#333" stroke-width="1.6">
<path d="M5 6 V1 H15 V6 M5 14 H2 C1.5 14 1 13.5 1 13 V7 C1 6.5 1.5 6 2 6 H18 C18.5 6 19 6.5 19 7 V13 C19 13.5 18.5 14 18 14 H15 M5 11 H15 V18 H5 Z"/></svg>

<div id="mask"></div>

<div class="a" style="left:595px;top:104px;width:731px;height:615.5px;border-radius:8px;background:#fff;box-shadow:0 2px 14px rgba(0,0,0,0.45);overflow:hidden">
  <div class="a" style="left:0;top:0;width:731px;height:51px;background:#2b80c6"></div>
</div>
<div class="a" style="left:605.5px;top:116.5px;font-size:18.8px;line-height:24px;color:#fff;font-weight:500">商品信息--信息框</div>
<svg class="a" style="left:1294px;top:120.5px" width="16" height="16" viewBox="0 0 16 16" stroke="#fff" stroke-width="2.6" stroke-linecap="round"><path d="M2.3 2.3 L13.7 13.7 M13.7 2.3 L2.3 13.7"/></svg>
<div class="a" style="left:600px;top:187.2px;width:719.5px;height:484.5px;border:1px solid #d2d2d2"></div>
<div class="a" style="left:600.4px;top:160.5px;width:71.3px;height:27px;background:#fff;border:1px solid #d2d2d2;border-bottom:none;text-align:center;line-height:26px;font-size:13.5px;color:#f08300">基本信息</div>
<div class="a" style="left:677.3px;top:160.5px;width:71.1px;height:27.5px;background:#f8f8f8;border:1px solid #dcdcdc;text-align:center;line-height:26px;font-size:13.5px;color:#444">扩展字段</div>
<div class="a" style="left:753.7px;top:160.5px;width:71.1px;height:27.5px;background:#f8f8f8;border:1px solid #dcdcdc;text-align:center;line-height:26px;font-size:13.5px;color:#444">售价管理</div>
<div class="a" style="left:830.3px;top:160.5px;width:71.3px;height:27.5px;background:#f8f8f8;border:1px solid #dcdcdc;text-align:center;line-height:26px;font-size:13.5px;color:#444">属性设置</div>
<div class="a" style="left:906.5px;top:160.5px;width:98.3px;height:27.5px;background:#f8f8f8;border:1px solid #dcdcdc;text-align:center;line-height:26px;font-size:13.5px;color:#444">商品图片管理</div>
<div class="a" style="left:1010.2px;top:160.5px;width:57.7px;height:27.5px;background:#f8f8f8;border:1px solid #dcdcdc;text-align:center;line-height:26px;font-size:13.5px;color:#444">供应商</div>
<div class="a" style="left:1073.3px;top:160.5px;width:71.2px;height:27.5px;background:#f8f8f8;border:1px solid #dcdcdc;text-align:center;line-height:26px;font-size:13.5px;color:#444">指定仓库</div>
<div class="a" style="left:558.8px;width:120px;text-align:right;top:199.1px;font-size:13.5px;line-height:20px;color:#333">选择分类</div>
<div class="inp" style="left:688.2px;top:192.9px;width:357.5px;height:31.3px;border:1px solid #cfcfcf"></div>
<svg class="a" style="left:1025.5px;top:205px" width="14" height="5" viewBox="0 0 14 5" fill="#6a7090"><circle cx="2.4" cy="2.5" r="1.4"/><circle cx="7.2" cy="2.5" r="1.4"/><circle cx="12" cy="2.5" r="1.4"/></svg>
<div class="a" style="left:551.5px;width:120px;text-align:right;top:235.1px;font-size:13.5px;line-height:20px;color:#333">商品名称</div>
<div class="a" style="left:674px;top:237.5px;font-size:13.5px;line-height:20px;color:#e02020">*</div>
<div class="inp" style="left:688.2px;top:228.9px;width:588.5px;height:31.3px;border:1px solid #f5a623"></div>
<div class="a" style="left:694px;top:236px;width:70px;height:18px;background:#3390ff"></div>
<div class="a" style="left:693px;top:234.7px;font-size:14.2px;line-height:20px;color:#fff;letter-spacing:-0.3px">小柴柴1223</div>
<svg class="a" style="left:1255.5px;top:238px" width="13" height="13" viewBox="0 0 13 13" stroke="#555" stroke-width="1.3"><path d="M.5 .5 L12.5 12.5 M12.5 .5 L.5 12.5"/></svg>
<div class="a" style="left:558.8px;width:120px;text-align:right;top:271.1px;font-size:13.5px;line-height:20px;color:#333">商品编号</div>
<div class="inp" style="left:688.2px;top:264.9px;width:357.5px;height:31.3px;border:1px solid #cfcfcf"></div>
<div class="a" style="left:1076px;top:271.2px;width:18.5px;height:18.5px;border:1px solid #ccc;background:#eee;border-radius:2px"></div>
<div class="a" style="left:1100.0px;top:271.1px;font-size:13.5px;line-height:20px;color:#999">编号递增</div>
<div class="a" style="left:558.8px;width:120px;text-align:right;top:307.1px;font-size:13.5px;line-height:20px;color:#333">成本算法</div>
<div class="inp" style="left:688.2px;top:300.9px;width:123.4px;height:31.3px;border:1px solid #cfcfcf"></div>
<div class="a" style="left:693.7px;top:307.1px;font-size:13.5px;line-height:20px;color:#444">移动加权法</div>
<svg class="a" style="left:792.0px;top:311.1px" width="13" height="9" viewBox="0 0 13 9" fill="none" stroke="#555" stroke-width="1.2"><path d="M.5 .8 L6.5 7.5 L12.5 .8"/></svg>
<svg class="a" style="left:828.5px;top:308.1px" width="16" height="16" viewBox="0 0 16 16" fill="none" stroke="#4a4a4a" stroke-width="1"><circle cx="7.8" cy="7.8" r="6.9"/><path d="M7.8 4.6 V12" stroke-width="1"/><path d="M7.1 4.8 H7.8" stroke-width="0.8"/></svg>
<div class="a" style="left:792.8px;width:120px;text-align:right;top:307.1px;font-size:13.5px;line-height:20px;color:#333">商品类型</div>
<div class="inp" style="left:922.2px;top:300.9px;width:123.5px;height:31.3px;border:1px solid #cfcfcf"></div>
<div class="a" style="left:927.4px;top:307.1px;font-size:13.5px;line-height:20px;color:#444">实物商品</div>
<svg class="a" style="left:1026.0px;top:311.1px" width="13" height="9" viewBox="0 0 13 9" fill="none" stroke="#555" stroke-width="1.2"><path d="M.5 .8 L6.5 7.5 L12.5 .8"/></svg>
<svg class="a" style="left:1062.5px;top:308.1px" width="16" height="16" viewBox="0 0 16 16" fill="none" stroke="#4a4a4a" stroke-width="1"><circle cx="7.8" cy="7.8" r="6.9"/><path d="M7.8 4.6 V12" stroke-width="1"/><path d="M7.1 4.8 H7.8" stroke-width="0.8"/></svg>
<div class="a" style="left:558.8px;width:120px;text-align:right;top:343.1px;font-size:13.5px;line-height:20px;color:#333">简名</div>
<div class="inp" style="left:688.2px;top:336.9px;width:123.4px;height:31.3px;border:1px solid #cfcfcf"></div>
<div class="a" style="left:792.8px;width:120px;text-align:right;top:343.1px;font-size:13.5px;line-height:20px;color:#333">拼音码</div>
<div class="inp" style="left:922.2px;top:336.9px;width:123.5px;height:31.3px;border:1px solid #cfcfcf"></div>
<div class="a" style="left:927.4px;top:341.6px;font-size:14.0px;line-height:20px;color:#333">xcc1223</div>
<div class="a" style="left:558.8px;width:120px;text-align:right;top:379.1px;font-size:13.5px;line-height:20px;color:#333">税收编码</div>
<div class="inp" style="left:688.2px;top:372.9px;width:123.4px;height:31.3px;border:1px solid #cfcfcf"></div>
<div class="a" style="left:792.8px;width:120px;text-align:right;top:379.1px;font-size:13.5px;line-height:20px;color:#333">国家税率(...</div>
<div class="inp" style="left:922.2px;top:372.9px;width:123.5px;height:31.3px;border:1px solid #cfcfcf"></div>
<div class="a" style="left:927.4px;top:377.6px;font-size:14.0px;line-height:20px;color:#333">0</div>
<svg class="a" style="left:1025.3px;top:380.6px" width="14" height="15" viewBox="0 0 14 15"><rect x="0.5" y="0.5" width="13" height="14" rx="1" fill="#fff" stroke="#444" stroke-width="1"/><path d="M1 3.6 H13" stroke="#888" stroke-width="1"/><rect x="1" y="13" width="12" height="1.6" fill="#aaa"/><g fill="#3a3a4a"><circle cx="3.5" cy="6.6" r="1.25"/><circle cx="7" cy="6.6" r="1.25"/><circle cx="10.5" cy="6.6" r="1.25"/><circle cx="3.5" cy="10.2" r="1.25"/><circle cx="7" cy="10.2" r="1.25"/><circle cx="10.5" cy="10.2" r="1.25"/></g></svg>
<svg class="a" style="left:1062.5px;top:380.1px" width="16" height="16" viewBox="0 0 16 16" fill="none" stroke="#4a4a4a" stroke-width="1"><circle cx="7.8" cy="7.8" r="6.9"/><path d="M7.8 4.6 V12" stroke-width="1"/><path d="M7.1 4.8 H7.8" stroke-width="0.8"/></svg>
<div class="a" style="left:1027.0px;width:120px;text-align:right;top:379.1px;font-size:13.5px;line-height:20px;color:#333">品牌</div>
<div class="inp" style="left:1156.4px;top:372.9px;width:123.4px;height:31.3px;border:1px solid #cfcfcf"></div>
<svg class="a" style="left:1259.5px;top:383.1px" width="13" height="9" viewBox="0 0 13 9" fill="none" stroke="#555" stroke-width="1.2"><path d="M.5 .8 L6.5 7.5 L12.5 .8"/></svg>
<svg class="a" style="left:1296px;top:380px" width="17" height="17" viewBox="0 0 24 24" fill="none" stroke="#555" stroke-width="1.6"><path d="M10.3 2.5h3.4l.6 2.9 2 .9 2.5-1.6 2.4 2.4-1.6 2.5.9 2 2.9.6v3.4l-2.9.6-.9 2 1.6 2.5-2.4 2.4-2.5-1.6-2 .9-.6 2.9h-3.4l-.6-2.9-2-.9-2.5 1.6-2.4-2.4 1.6-2.5-.9-2-2.9-.6v-3.4l2.9-.6.9-2-1.6-2.5 2.4-2.4 2.5 1.6 2-.9z"/><circle cx="12" cy="12" r="3.6"/></svg>
<div class="a" style="left:558.8px;width:120px;text-align:right;top:415.1px;font-size:13.5px;line-height:20px;color:#333">产地</div>
<div class="inp" style="left:688.2px;top:408.9px;width:123.4px;height:31.3px;border:1px solid #cfcfcf"></div>
<div class="a" style="left:792.8px;width:120px;text-align:right;top:415.1px;font-size:13.5px;line-height:20px;color:#333">难度系数</div>
<div class="inp" style="left:922.2px;top:408.9px;width:123.5px;height:31.3px;border:1px solid #cfcfcf"></div>
<div class="a" style="left:927.4px;top:413.6px;font-size:14.0px;line-height:20px;color:#333">0</div>
<svg class="a" style="left:1025.3px;top:416.6px" width="14" height="15" viewBox="0 0 14 15"><rect x="0.5" y="0.5" width="13" height="14" rx="1" fill="#fff" stroke="#444" stroke-width="1"/><path d="M1 3.6 H13" stroke="#888" stroke-width="1"/><rect x="1" y="13" width="12" height="1.6" fill="#aaa"/><g fill="#3a3a4a"><circle cx="3.5" cy="6.6" r="1.25"/><circle cx="7" cy="6.6" r="1.25"/><circle cx="10.5" cy="6.6" r="1.25"/><circle cx="3.5" cy="10.2" r="1.25"/><circle cx="7" cy="10.2" r="1.25"/><circle cx="10.5" cy="10.2" r="1.25"/></g></svg>
<svg class="a" style="left:1062.5px;top:416.1px" width="16" height="16" viewBox="0 0 16 16" fill="none" stroke="#4a4a4a" stroke-width="1"><circle cx="7.8" cy="7.8" r="6.9"/><path d="M7.8 4.6 V12" stroke-width="1"/><path d="M7.1 4.8 H7.8" stroke-width="0.8"/></svg>
<div class="a" style="left:1027.0px;width:120px;text-align:right;top:415.1px;font-size:13.5px;line-height:20px;color:#333">规格</div>
<div class="inp" style="left:1156.4px;top:408.9px;width:123.4px;height:31.3px;border:1px solid #cfcfcf"></div>
<div class="a" style="left:558.8px;width:120px;text-align:right;top:451.1px;font-size:13.5px;line-height:20px;color:#333">型号</div>
<div class="inp" style="left:688.2px;top:444.9px;width:123.4px;height:31.3px;border:1px solid #cfcfcf"></div>
<div class="a" style="left:792.8px;width:120px;text-align:right;top:451.1px;font-size:13.5px;line-height:20px;color:#333">重量(kg)</div>
<div class="inp" style="left:922.2px;top:444.9px;width:123.5px;height:31.3px;border:1px solid #cfcfcf"></div>
<div class="a" style="left:927.4px;top:449.6px;font-size:14.0px;line-height:20px;color:#333">0</div>
<svg class="a" style="left:1025.3px;top:452.6px" width="14" height="15" viewBox="0 0 14 15"><rect x="0.5" y="0.5" width="13" height="14" rx="1" fill="#fff" stroke="#444" stroke-width="1"/><path d="M1 3.6 H13" stroke="#888" stroke-width="1"/><rect x="1" y="13" width="12" height="1.6" fill="#aaa"/><g fill="#3a3a4a"><circle cx="3.5" cy="6.6" r="1.25"/><circle cx="7" cy="6.6" r="1.25"/><circle cx="10.5" cy="6.6" r="1.25"/><circle cx="3.5" cy="10.2" r="1.25"/><circle cx="7" cy="10.2" r="1.25"/><circle cx="10.5" cy="10.2" r="1.25"/></g></svg>
<div class="a" style="left:558.8px;width:120px;text-align:right;top:487.1px;font-size:13.5px;line-height:20px;color:#333">长度</div>
<div class="inp" style="left:688.2px;top:480.9px;width:123.4px;height:31.3px;border:1px solid #cfcfcf"></div>
<div class="a" style="left:693.8px;top:485.6px;font-size:14.0px;line-height:20px;color:#333">0</div>
<svg class="a" style="left:791.3px;top:488.6px" width="14" height="15" viewBox="0 0 14 15"><rect x="0.5" y="0.5" width="13" height="14" rx="1" fill="#fff" stroke="#444" stroke-width="1"/><path d="M1 3.6 H13" stroke="#888" stroke-width="1"/><rect x="1" y="13" width="12" height="1.6" fill="#aaa"/><g fill="#3a3a4a"><circle cx="3.5" cy="6.6" r="1.25"/><circle cx="7" cy="6.6" r="1.25"/><circle cx="10.5" cy="6.6" r="1.25"/><circle cx="3.5" cy="10.2" r="1.25"/><circle cx="7" cy="10.2" r="1.25"/><circle cx="10.5" cy="10.2" r="1.25"/></g></svg>
<div class="a" style="left:792.8px;width:120px;text-align:right;top:487.1px;font-size:13.5px;line-height:20px;color:#333">宽度</div>
<div class="inp" style="left:922.2px;top:480.9px;width:123.5px;height:31.3px;border:1px solid #cfcfcf"></div>
<div class="a" style="left:927.4px;top:485.6px;font-size:14.0px;line-height:20px;color:#333">0</div>
<svg class="a" style="left:1025.3px;top:488.6px" width="14" height="15" viewBox="0 0 14 15"><rect x="0.5" y="0.5" width="13" height="14" rx="1" fill="#fff" stroke="#444" stroke-width="1"/><path d="M1 3.6 H13" stroke="#888" stroke-width="1"/><rect x="1" y="13" width="12" height="1.6" fill="#aaa"/><g fill="#3a3a4a"><circle cx="3.5" cy="6.6" r="1.25"/><circle cx="7" cy="6.6" r="1.25"/><circle cx="10.5" cy="6.6" r="1.25"/><circle cx="3.5" cy="10.2" r="1.25"/><circle cx="7" cy="10.2" r="1.25"/><circle cx="10.5" cy="10.2" r="1.25"/></g></svg>
<div class="a" style="left:1027.0px;width:120px;text-align:right;top:487.1px;font-size:13.5px;line-height:20px;color:#333">高度</div>
<div class="inp" style="left:1156.4px;top:480.9px;width:123.4px;height:31.3px;border:1px solid #cfcfcf"></div>
<div class="a" style="left:1161.5px;top:485.6px;font-size:14.0px;line-height:20px;color:#333">0</div>
<svg class="a" style="left:1259.0px;top:488.6px" width="14" height="15" viewBox="0 0 14 15"><rect x="0.5" y="0.5" width="13" height="14" rx="1" fill="#fff" stroke="#444" stroke-width="1"/><path d="M1 3.6 H13" stroke="#888" stroke-width="1"/><rect x="1" y="13" width="12" height="1.6" fill="#aaa"/><g fill="#3a3a4a"><circle cx="3.5" cy="6.6" r="1.25"/><circle cx="7" cy="6.6" r="1.25"/><circle cx="10.5" cy="6.6" r="1.25"/><circle cx="3.5" cy="10.2" r="1.25"/><circle cx="7" cy="10.2" r="1.25"/><circle cx="10.5" cy="10.2" r="1.25"/></g></svg>
<div class="a" style="left:558.8px;width:120px;text-align:right;top:523.1px;font-size:13.5px;line-height:20px;color:#333">条码格式</div>
<div class="inp" style="left:688.2px;top:516.9px;width:123.4px;height:31.3px;border:1px solid #cfcfcf"></div>
<div class="a" style="left:693.8px;top:523.1px;font-size:13.5px;line-height:20px;color:#444">手工录入完整条</div>
<svg class="a" style="left:828.5px;top:524.1px" width="16" height="16" viewBox="0 0 16 16" fill="none" stroke="#4a4a4a" stroke-width="1"><circle cx="7.8" cy="7.8" r="6.9"/><path d="M7.8 4.6 V12" stroke-width="1"/><path d="M7.1 4.8 H7.8" stroke-width="0.8"/></svg>
<div class="a" style="left:789px;top:521px;width:20px;height:22px;background:#fff"></div>
<svg class="a" style="left:791.5px;top:529.5px" width="14" height="5" viewBox="0 0 14 5" fill="#6a7090"><circle cx="2.4" cy="2.5" r="1.4"/><circle cx="7.2" cy="2.5" r="1.4"/><circle cx="12" cy="2.5" r="1.4"/></svg>
<div class="a" style="left:792.8px;width:120px;text-align:right;top:523.1px;font-size:13.5px;line-height:20px;color:#333">商品码</div>
<div class="inp" style="left:922.2px;top:516.9px;width:123.5px;height:31.3px;border:1px solid #cfcfcf"></div>
<svg class="a" style="left:1062.5px;top:524.1px" width="16" height="16" viewBox="0 0 16 16" fill="none" stroke="#4a4a4a" stroke-width="1"><circle cx="7.8" cy="7.8" r="6.9"/><path d="M7.8 4.6 V12" stroke-width="1"/><path d="M7.1 4.8 H7.8" stroke-width="0.8"/></svg>
<div class="a" style="left:558.8px;width:120px;text-align:right;top:559.1px;font-size:13.5px;line-height:20px;color:#333">供货信息</div>
<div class="inp" style="left:688.2px;top:552.9px;width:357.5px;height:31.3px;border:1px solid #cfcfcf"></div>
<div class="a" style="left:1074.4px;top:559.1px;font-size:13.5px;line-height:20px;color:#444">参考成本...</div>
<div class="inp" style="left:1156.4px;top:552.9px;width:123.4px;height:31.3px;border:1px solid #cfcfcf"></div>
<div class="a" style="left:1161.5px;top:557.6px;font-size:14.0px;line-height:20px;color:#333">0</div>
<svg class="a" style="left:1259.0px;top:560.6px" width="14" height="15" viewBox="0 0 14 15"><rect x="0.5" y="0.5" width="13" height="14" rx="1" fill="#fff" stroke="#444" stroke-width="1"/><path d="M1 3.6 H13" stroke="#888" stroke-width="1"/><rect x="1" y="13" width="12" height="1.6" fill="#aaa"/><g fill="#3a3a4a"><circle cx="3.5" cy="6.6" r="1.25"/><circle cx="7" cy="6.6" r="1.25"/><circle cx="10.5" cy="6.6" r="1.25"/><circle cx="3.5" cy="10.2" r="1.25"/><circle cx="7" cy="10.2" r="1.25"/><circle cx="10.5" cy="10.2" r="1.25"/></g></svg>
<svg class="a" style="left:1296.5px;top:560.1px" width="16" height="16" viewBox="0 0 16 16" fill="none" stroke="#4a4a4a" stroke-width="1"><circle cx="7.8" cy="7.8" r="6.9"/><path d="M7.8 4.6 V12" stroke-width="1"/><path d="M7.1 4.8 H7.8" stroke-width="0.8"/></svg>
<div class="a" style="left:558.8px;width:120px;text-align:right;top:595.1px;font-size:13.5px;line-height:20px;color:#333">是否计重</div>
<div class="inp" style="left:688.2px;top:588.9px;width:123.4px;height:31.3px;border:1px solid #cfcfcf"></div>
<div class="a" style="left:693.7px;top:595.1px;font-size:13.5px;line-height:20px;color:#444">不计重</div>
<svg class="a" style="left:792.0px;top:599.1px" width="13" height="9" viewBox="0 0 13 9" fill="none" stroke="#555" stroke-width="1.2"><path d="M.5 .8 L6.5 7.5 L12.5 .8"/></svg>
<svg class="a" style="left:828.5px;top:596.1px" width="16" height="16" viewBox="0 0 16 16" fill="none" stroke="#4a4a4a" stroke-width="1"><circle cx="7.8" cy="7.8" r="6.9"/><path d="M7.8 4.6 V12" stroke-width="1"/><path d="M7.1 4.8 H7.8" stroke-width="0.8"/></svg>
<div class="a" style="left:792.8px;width:120px;text-align:right;top:595.1px;font-size:13.5px;line-height:20px;color:#333">副单位名</div>
<div class="inp" style="left:922.2px;top:588.9px;width:123.5px;height:31.3px;border:1px solid #cfcfcf"></div>
<div class="a" style="left:558.8px;width:120px;text-align:right;top:631.1px;font-size:13.5px;line-height:20px;color:#333">商品备注</div>
<div class="inp" style="left:688.2px;top:624.9px;width:588.5px;height:31.3px;border:1px solid #cfcfcf"></div>
<div class="btn" style="left:1147.5px;top:678.5px;width:100px;height:32.5px;line-height:30px;font-size:13.5px;background:#f6f6f6;border-color:#dadada">保存并关闭(<u>K</u>)</div>
<div class="btn" style="left:1255.5px;top:678.5px;width:64.5px;height:31px;line-height:29px;font-size:13.5px;background:#f6f6f6;border-color:#dadada">关闭(<u>X</u>)</div>
<div class="a" style="left:1141px;top:593px;width:146px;height:33.5px;background:#444;box-shadow:0 2px 6px rgba(0,0,0,0.45);color:#fff;font-size:13.5px;line-height:34px;text-align:center;letter-spacing:-0.2px;text-shadow:0.3px 0 0 #fff">参考成本价(基本单位)</div>

<div class="red" style="left:82.0px;top:26.3px;width:85.0px;height:47.2px;border-width:7px"></div>
<div class="red" style="left:99.0px;top:72.1px;width:133.0px;height:47.9px;border-width:7px"></div>
<div class="red" style="left:463.0px;top:234.2px;width:52.0px;height:610.8px;border-width:7.0px"></div>
<div class="red" style="left:1065.4px;top:540.4px;width:226.2px;height:49.4px;border-width:6.5px"></div>
<div class="red" style="left:1140.0px;top:667.2px;width:113.6px;height:50.8px;border-width:6.6px"></div>
<div class="circ" style="left:133.0px;top:37.0px;width:26.0px;height:26.0px;line-height:26.0px">1</div>
<div class="circ" style="left:197.0px;top:82.0px;width:26.0px;height:26.0px;line-height:26.0px">2</div>
<div class="circ" style="left:437.7px;top:223.8px;width:25.6px;height:25.6px;line-height:25.6px">3</div>
<div class="circ" style="left:1040.8px;top:555.8px;width:25.6px;height:25.6px;line-height:25.6px">4</div>
<div class="circ" style="left:1104.3px;top:683.6px;width:26.4px;height:26.4px;line-height:26.4px">5</div>

</body></html>
